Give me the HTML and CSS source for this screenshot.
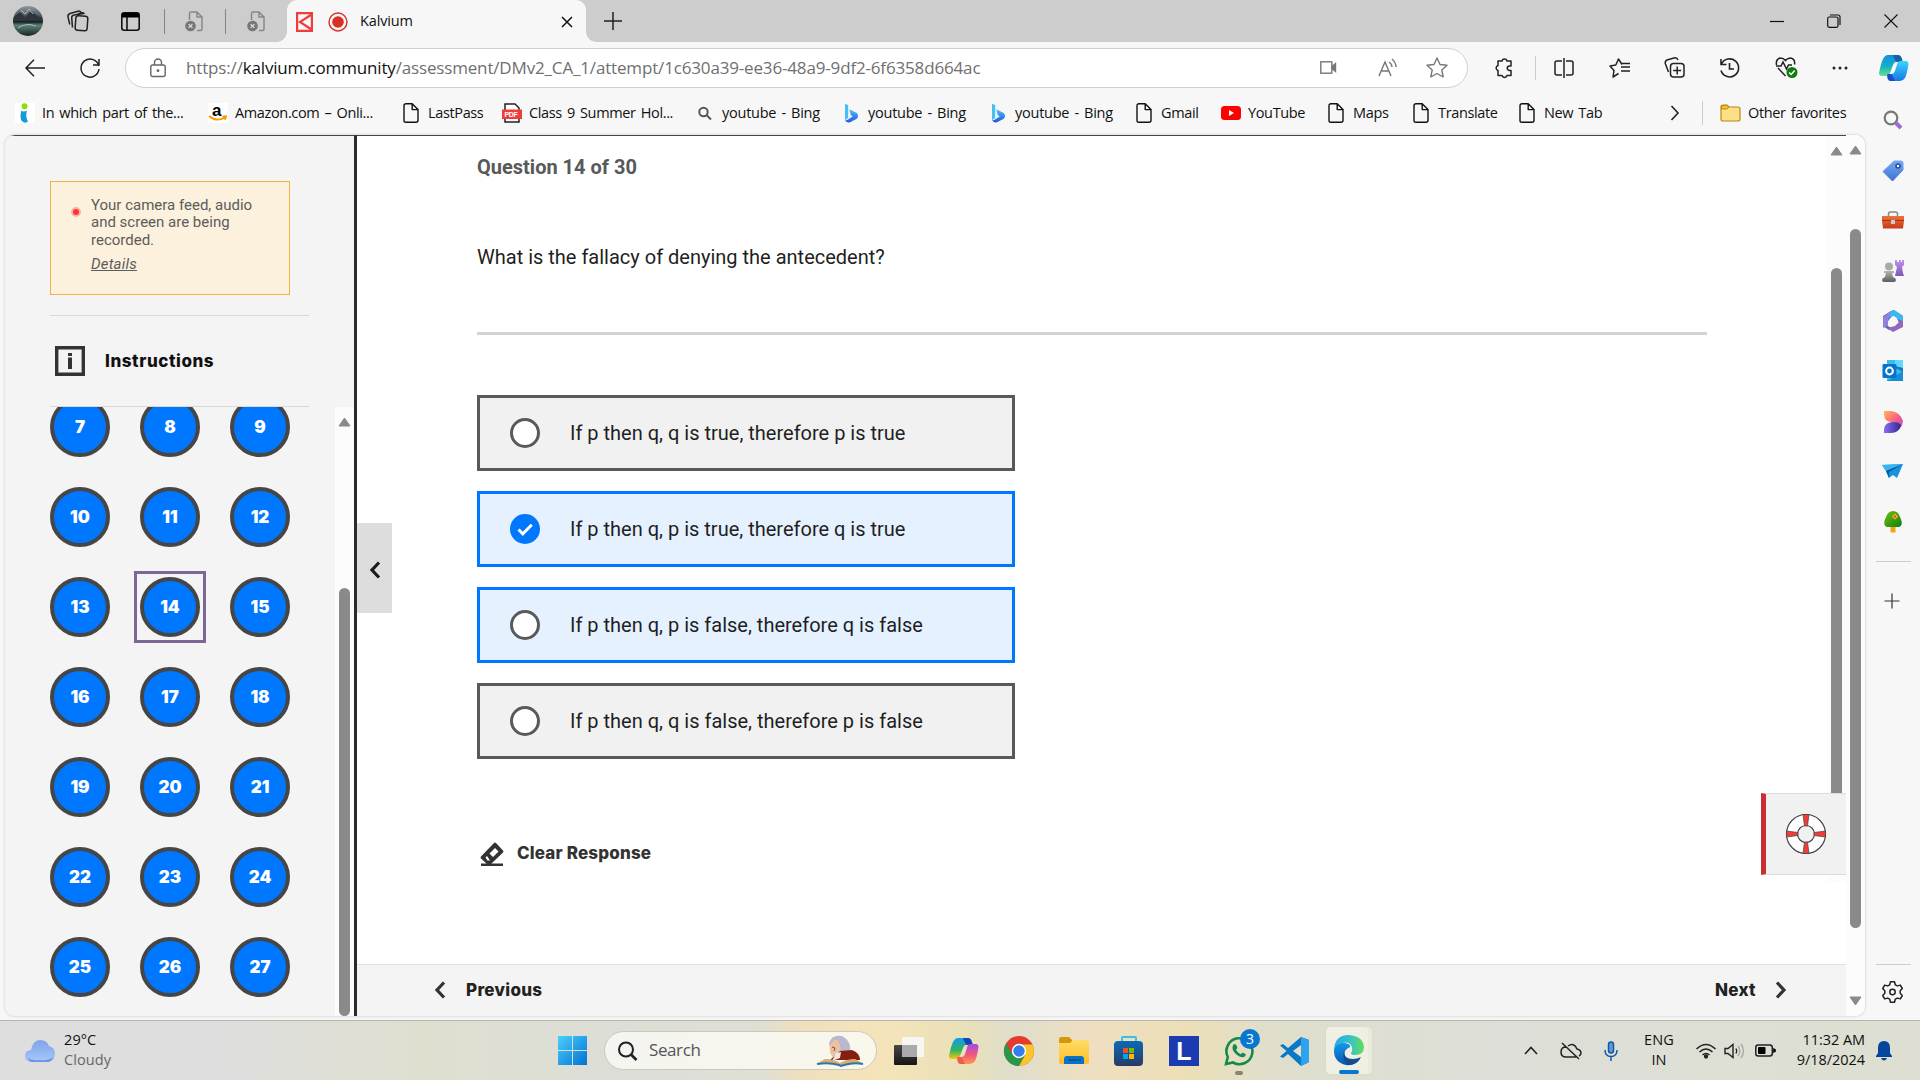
FILE: index.html
```html
<!DOCTYPE html>
<html lang="en">
<head>
<meta charset="utf-8">
<title>Kalvium</title>
<link rel="stylesheet" href="styles.css">
</head>
<body>
<svg class="defs" width="0" height="0">
  <defs>
    <linearGradient id="bing" x1="0" y1="0" x2="0" y2="1"><stop offset="0" stop-color="#4cc3f5"/><stop offset="1" stop-color="#2356e0"/></linearGradient>
    <linearGradient id="cyan" x1="0" y1="0" x2="1" y2="1"><stop offset="0" stop-color="#4cd0fb"/><stop offset="1" stop-color="#0072d4"/></linearGradient>
    <linearGradient id="copA" x1="0" y1="0" x2="0" y2="1"><stop offset="0" stop-color="#1590e0"/><stop offset=".55" stop-color="#11b3c5"/><stop offset="1" stop-color="#6be08a"/></linearGradient>
    <linearGradient id="copB" x1="0" y1="0" x2="0" y2="1"><stop offset="0" stop-color="#3bd5ff"/><stop offset="1" stop-color="#1477e8"/></linearGradient>
    <linearGradient id="rainA" x1="0" y1="0" x2="0" y2="1"><stop offset="0" stop-color="#109cf0"/><stop offset=".6" stop-color="#35b45c"/><stop offset="1" stop-color="#ffc60a"/></linearGradient>
    <linearGradient id="rainB" x1="0" y1="0" x2="0" y2="1"><stop offset="0" stop-color="#a24be8"/><stop offset=".55" stop-color="#f4577c"/><stop offset="1" stop-color="#ff9a4a"/></linearGradient>
    <linearGradient id="purple" x1="0" y1="0" x2="0" y2="1"><stop offset="0" stop-color="#c193ea"/><stop offset="1" stop-color="#7e57b8"/></linearGradient>
    <linearGradient id="grey" x1="0" y1="0" x2="0" y2="1"><stop offset="0" stop-color="#b5b5b5"/><stop offset="1" stop-color="#5c5c5c"/></linearGradient>
    <linearGradient id="tag" x1="0" y1="0" x2="0" y2="1"><stop offset="0" stop-color="#76a9f1"/><stop offset="1" stop-color="#3d71d3"/></linearGradient>
    <linearGradient id="box" x1="0" y1="0" x2="0" y2="1"><stop offset="0" stop-color="#f0713a"/><stop offset="1" stop-color="#c43a16"/></linearGradient>
    <linearGradient id="desA" x1="0" y1="0" x2="1" y2="1"><stop offset="0" stop-color="#ffb45e"/><stop offset=".5" stop-color="#fb5f82"/><stop offset="1" stop-color="#a83cf5"/></linearGradient>
    <linearGradient id="desB" x1="0" y1="0" x2="1" y2="0"><stop offset="0" stop-color="#8a6cf2"/><stop offset="1" stop-color="#33278f"/></linearGradient>
    <linearGradient id="tree" x1="0" y1="0" x2="1" y2="1"><stop offset="0" stop-color="#6fc40f"/><stop offset="1" stop-color="#107c10"/></linearGradient>
    <linearGradient id="folder" x1="0" y1="0" x2="0" y2="1"><stop offset="0" stop-color="#ffdc68"/><stop offset="1" stop-color="#fcbf27"/></linearGradient>
    <linearGradient id="store" x1="0" y1="0" x2="0" y2="1"><stop offset="0" stop-color="#0a6bb5"/><stop offset="1" stop-color="#293a66"/></linearGradient>
    <linearGradient id="edgeG" x1="0" y1="0" x2="1" y2="0"><stop offset="0" stop-color="#2aa9e8"/><stop offset=".55" stop-color="#35c3c8"/><stop offset="1" stop-color="#66dd55"/></linearGradient>
    <linearGradient id="edgeB" x1="0" y1="0" x2="0" y2="1"><stop offset="0" stop-color="#159ae8"/><stop offset="1" stop-color="#0b56ae"/></linearGradient>
    <linearGradient id="cloud" x1="0" y1="0" x2="0" y2="1"><stop offset="0" stop-color="#7fa3e8"/><stop offset="1" stop-color="#a7c8f8"/></linearGradient>
    <linearGradient id="tvA" x1="0" y1="0" x2="0" y2="1"><stop offset="0" stop-color="#474747"/><stop offset="1" stop-color="#161616"/></linearGradient>
    <linearGradient id="lake" x1="0" y1="0" x2="0" y2="1"><stop offset="0" stop-color="#8f98a3"/><stop offset=".42" stop-color="#3d4349"/><stop offset=".5" stop-color="#0e1413"/><stop offset=".65" stop-color="#5d7f78"/><stop offset="1" stop-color="#142421"/></linearGradient>
    <symbol id="page" viewBox="0 0 20 20"><path d="M3 2.700Q3 .8 5 .8h6.200L17 6.600v11Q17 19.200 15 19.200H5Q3 19.200 3 17.400zM11.200.8v5.800H17" fill="none" stroke="#111" stroke-width="1.400" stroke-linejoin="round"/></symbol>
    <symbol id="b" viewBox="0 0 20 20"><path d="M4 .8l3.200 1.300v13L4 17.200z" fill="#46c0f4"/><path d="M8.300 6.200l7 3.500c2.400 1.400 2 4.800.5 6L9 19.300q-3 1-5-2.100 2 .2 3.800-1.200l4-2.700-2-1z" fill="url(#bing)"/></symbol>
    <symbol id="deadpage" viewBox="0 0 19 21"><path d="M4.500 9V2.500Q4.500 1 6 1h6l5 5v12q0 1.500-1.500 1.500H12M12 1v5h5" fill="none" stroke="#888" stroke-width="1.500"/><circle cx="5.500" cy="15" r="5.300" fill="#777"/><path d="M3.600 13.100l3.800 3.800m0-3.800l-3.800 3.800" stroke="#ddd" stroke-width="1.300"/></symbol>
  </defs>
</svg>

<header class="tabs">
  <svg width="30" height="30" viewBox="0 0 30 30"><circle cx="15" cy="15" r="15" fill="url(#lake)"/><path d="M1 11l6-5 5 5 6-6 5 4 6 3v3H0z" fill="#2f353c"/><path d="M8 4l4 4 4-5 4 5M5 22q8-6 18-2" stroke="#abb8bd" fill="none"/></svg>
  <svg width="22" height="22" viewBox="0 0 22 22" fill="none" stroke="#222" stroke-width="1.500"><rect x="8.500" y="6" width="12" height="14.500" rx="2.500" transform="rotate(4 14 13)"/><path d="M5.500 17.500L4.700 8Q4.600 5.300 7 5l10-1.500q-.5-1-2-.8L11 3.400M2.800 14.500L1 6.800Q.7 4.300 3 3.500L11 1.200q2-.5 3 1.200"/></svg>
  <svg width="19" height="19" viewBox="0 0 19 19"><rect x=".8" y=".8" width="17.400" height="17.400" rx="2.500" fill="none" stroke="#111" stroke-width="1.600"/><path d="M1 1h17v4.500H1z"/><path d="M6 5v13" stroke="#111" stroke-width="1.600"/></svg>
  <i class="tab-sep"></i>
  <svg width="19" height="21"><use href="#deadpage"/></svg>
  <i class="tab-sep"></i>
  <svg width="19" height="21"><use href="#deadpage"/></svg>
  <div class="tab">
    <svg width="17" height="20" viewBox="0 0 17 20" fill="none" stroke="#f23c3c" stroke-width="2.200"><path d="M1.100 1.100h14.800v17.800H1.100zM15.500 2.500L4 10l11.500 7.500"/></svg>
    <svg width="20" height="20" viewBox="0 0 20 20"><circle cx="10" cy="10" r="9" fill="none" stroke="#d93025" stroke-width="1.400"/><circle cx="10" cy="10" r="5.800" fill="#d93025"/></svg>
    <span class="tab-title">Kalvium</span>
    <svg width="12" height="12" viewBox="0 0 12 12" stroke="#111" stroke-width="1.500"><path d="M1 1l10 10M11 1L1 11"/></svg>
  </div>
  <svg width="18" height="18" viewBox="0 0 18 18" stroke="#222" stroke-width="1.500"><path d="M9 0v18M0 9h18"/></svg>
  <svg width="14" height="14" viewBox="0 0 14 14" stroke="#111" stroke-width="1.200"><path d="M0 7.500h14"/></svg>
  <svg width="14" height="14" viewBox="0 0 14 14" fill="none" stroke="#111" stroke-width="1.200"><rect x=".7" y="3" width="10.300" height="10.300" rx="1.500"/><path d="M3 1h8q2 0 2 2v8"/></svg>
  <svg width="14" height="14" viewBox="0 0 14 14" stroke="#111" stroke-width="1.100"><path d="M.5.500l13 13m0-13l-13 13"/></svg>
</header>

<nav class="toolbar">
  <svg width="20" height="18" viewBox="0 0 20 18" fill="none" stroke="#222" stroke-width="1.500"><path d="M20 9H1M9 .8L1 9l8 8.200"/></svg>
  <svg width="20" height="20" viewBox="0 0 20 20" fill="none" stroke="#222" stroke-width="1.500"><path d="M18.800 8A9 9 0 1 0 19 11M19 1v6h-6"/></svg>
  <div class="address">
    <svg width="16" height="20" viewBox="0 0 16 20" fill="none" stroke="#666" stroke-width="1.400"><rect x=".8" y="7" width="14.400" height="11.500" rx="2"/><path d="M4.500 7V4.500a3.500 3.500 0 0 1 7 0V7"/><circle cx="8" cy="12.700" r=".7" fill="#555"/></svg>
    <span class="url">https://<b>kalvium.community</b>/assessment/DMv2_CA_1/attempt/1c630a39-ee36-48a9-9df2-6f6358d664ac</span>
    <svg width="17" height="13" viewBox="0 0 17 13" fill="none" stroke="#777" stroke-width="1.400"><rect x=".8" y=".8" width="11" height="11.400"/><path d="M12 5.500l3.500-3v8L12 7.500z" fill="#777"/></svg>
    <svg width="20" height="20" viewBox="0 0 20 20" fill="none" stroke="#777" stroke-width="1.400"><path d="M1 18L7 4l6 14M3 13h8M11 4q3 2 3 5M14 1q4 3.500 4 8"/></svg>
    <svg width="22" height="21" viewBox="0 0 22 21" fill="none" stroke="#777" stroke-width="1.400" stroke-linejoin="round"><path d="M11 1l3 6.500 7 .8-5.200 4.700 1.400 7L11 16.500 4.800 20l1.400-7L1 8.300l7-.8z"/></svg>
  </div>
  <svg width="20" height="20" viewBox="0 0 20 20" fill="none" stroke="#222" stroke-width="1.500" stroke-linejoin="round"><path d="M4 3h4a2.600 2.600 0 0 1 5 0h4v5h-1.500a2.200 2.200 0 0 0 0 4.500H17v5h-4a2.600 2.600 0 0 1-5 0H4v-5a2.600 2.600 0 0 1 0-5z"/></svg>
  <i class="sep"></i>
  <svg width="20" height="20" viewBox="0 0 20 20" fill="none" stroke="#222" stroke-width="1.500"><path d="M8 3H3Q1 3 1 5v10q0 2 2 2h5M12 3h5q2 0 2 2v10q0 2-2 2h-5M10 0v20"/></svg>
  <svg width="21" height="20" viewBox="0 0 21 20" fill="none" stroke="#222" stroke-width="1.500" stroke-linejoin="round"><path d="M13 6.500L9.500 1 6.800 7 1 8l4 4.500-1 6.500 5.500-3.500M12 9h9M12 5.500h9M12 13h9" /></svg>
  <svg width="21" height="21" viewBox="0 0 21 21" fill="none" stroke="#222" stroke-width="1.500"><rect x="6.500" y="6.500" width="13.500" height="13.500" rx="3"/><path d="M13.200 9.500v8M9.200 13.500h8M4.500 15L1.300 6.500Q.8 4 3 3L10 1q3-.8 4 2"/></svg>
  <svg width="21" height="20" viewBox="0 0 21 20" fill="none" stroke="#222" stroke-width="1.600"><path d="M2 1v5.500h5.500M2.500 6A9 9 0 1 1 2 12.500M10.500 5v6h4.500"/></svg>
  <svg width="23" height="21" viewBox="0 0 23 21" fill="none" stroke="#222" stroke-width="1.500"><path d="M1.500 8Q.5 2 5.500 1q3 0 5 2.500Q12.500 1 15.500 1q5 1 4 6.500M3 11l7.500 8M1 9h5l2-4 3.500 7 2-4H17"/><circle cx="17" cy="15.500" r="5.500" fill="#107c10" stroke="none"/><path d="M14.200 15.500l2 2 3.400-4" stroke="#fff"/></svg>
  <svg width="18" height="6" viewBox="0 0 18 6" fill="#222"><circle cx="3" cy="3" r="1.500"/><circle cx="9" cy="3" r="1.500"/><circle cx="15" cy="3" r="1.500"/></svg>
  <svg width="30" height="28" viewBox="0 0 30 28"><path d="M9 1h9q3 0 4 3l1 4h-6q-2 0-3 3l-3 8q-1 3-4 3H3q-3 0-3-3Q2 9 4 5 6 1 9 1z" fill="url(#copA)"/><path d="M14 1h5q3 0 4 4l1 3h-6q-2-1-4-7z" fill="#1562a8"/><path d="M21 27h-9q-3 0-3.500-3L8 20h5q2 0 3-3l2.500-8q1-2 3-2h5q3 0 3 3Q28 20 26 24q-2 3-5 3z" fill="url(#copB)"/><path d="M8.500 20h4l3.500 7h-4q-3 0-3.500-4z" fill="#2049c9"/></svg>
</nav>

<nav class="bookmarks">
  <a><svg width="20" height="20"><path d="M0 0h20v20H0z" fill="#fff"/><circle cx="9.500" cy="3.200" r="3" fill="#8ee000"/><path d="M6 8q3.500 1 6-.5-2 6 1 11-4 3-7-1.500-1-4 0-9z" fill="#149bd7"/></svg>In which part of the...</a>
  <a><svg width="20" height="20"><path d="M0 0h20v20H0z" fill="#fff"/><text x="4" y="13" class="amz">a</text><path d="M1 13q8 6.500 16 1.500M14.500 13.500l3.500-.3-1 3.500" fill="none" stroke="#f90" stroke-width="1.800"/></svg>Amazon.com – Onli...</a>
  <a><svg width="20" height="20"><use href="#page"/></svg>LastPass</a>
  <a><svg width="20" height="20"><path d="M3 6V1h10l4 4v14H3z" fill="#fff" stroke="#222" stroke-width="1.500"/><path d="M0 6.500h20v9.500H0z" fill="#f23b3b"/><text x="2.500" y="14" class="pdf">PDF</text></svg>Class 9 Summer Hol...</a>
  <a><svg width="20" height="20" fill="none" stroke="#555" stroke-width="2"><circle cx="8.500" cy="9" r="4.200"/><path d="M11.500 12l4.500 4.500"/></svg>youtube - Bing</a>
  <a><svg width="20" height="20"><use href="#b"/></svg>youtube - Bing</a>
  <a><svg width="20" height="20"><use href="#b"/></svg>youtube - Bing</a>
  <a><svg width="20" height="20"><use href="#page"/></svg>Gmail</a>
  <a><svg width="20" height="20"><rect y="3" width="20" height="14" rx="3.500" fill="red"/><path d="M8 7l5 3-5 3z" fill="#fff"/></svg>YouTube</a>
  <a><svg width="20" height="20"><use href="#page"/></svg>Maps</a>
  <a><svg width="20" height="20"><use href="#page"/></svg>Translate</a>
  <a><svg width="20" height="20"><use href="#page"/></svg>New Tab</a>
  <svg width="10" height="16" fill="none" stroke="#222" stroke-width="1.600"><path d="M1.500 1l6.500 7-6.500 7"/></svg>
  <i class="sep"></i>
  <a><svg width="21" height="20"><path d="M1 4q0-2 2-2h4l2 2h9q2 0 2 2v10q0 2-2 2H3q-2 0-2-2z" fill="#ffdf85" stroke="#b88a1b" stroke-width="1.200"/><path d="M1.500 6V4q0-1.500 1.500-1.500h4L9 4 7 6z" fill="#f3c22f" stroke="#b88a1b"/></svg>Other favorites</a>
</nav>

<div class="browser">
  <main class="page">
    <aside class="side">
      <div class="alert">
        <i class="rec"></i>
        <div><p>Your camera feed, audio and screen are being recorded.</p><a class="details">Details</a></div>
      </div>
      <div class="instructions">
        <svg width="30" height="30" viewBox="0 0 30 30"><path d="M1.700 1.700h26.600v26.600H1.700z" fill="none" stroke="#333" stroke-width="3.400"/><path d="M13 7h4v3h-4zM13 11.500h4V23h-4z" fill="#333"/></svg>
        <span>Instructions</span>
      </div>
      <div class="numbers">
        <div class="grid">
          <b>7</b><b>8</b><b>9</b><b>10</b><b>11</b><b>12</b><b>13</b><b class="current">14</b><b>15</b><b>16</b><b>17</b><b>18</b><b>19</b><b>20</b><b>21</b><b>22</b><b>23</b><b>24</b><b>25</b><b>26</b><b>27</b>
        </div>
        <div class="scroll side-scroll"><svg width="13" height="10"><path d="M6.500 1L12 9H1z" fill="#8a8a8a" stroke="#8a8a8a" stroke-linejoin="round"/></svg><i></i></div>
      </div>
    </aside>
    <section class="main">
      <div class="upper">
        <div class="question">
          <h1>Question 14 of 30</h1>
          <p class="ask">What is the fallacy of denying the antecedent?</p>
          <div class="options">
            <label><i></i>If p then q, q is true, therefore p is true</label>
            <label class="on"><i class="tick"><svg width="30" height="30" fill="none" stroke="#fff" stroke-width="3"><path d="M8.500 15.500l4.300 4.300 9-9"/></svg></i>If p then q, p is true, therefore q is true</label>
            <label class="on"><i></i>If p then q, p is false, therefore q is false</label>
            <label><i></i>If p then q, q is false, therefore p is false</label>
          </div>
          <div class="clear"><svg width="24" height="24" viewBox="0 0 24 24"><path d="M1 14.500L14 1q1-1 2 0l7 7.500q1 1 0 2L11 22H7l-6-5.500q-1-1 0-2z" fill="#333"/><path d="M9.500 11.500L15 6l3.500 3.500-5.500 5.500zM5.500 15.500l1.500-1.500 3 4.500H7.500z" fill="#fff"/><path d="M1 21.500h22V24H1z" fill="#333"/></svg><span>Clear Response</span></div>
        </div>
        <div class="scroll inner-scroll"><svg width="13" height="10"><path d="M6.500 1L12 9H1z" fill="#8a8a8a" stroke="#8a8a8a" stroke-linejoin="round"/></svg><i></i></div>
        <button class="collapse"><svg width="12" height="18" fill="none" stroke="#1c1c1c" stroke-width="3.200"><path d="M10 1.500L3 9l7 7.500"/></svg></button>
        <div class="help"><svg width="40" height="40" viewBox="0 0 40 40"><circle cx="20" cy="20" r="14" fill="none" stroke="#444" stroke-width="12.200"/><circle cx="20" cy="20" r="14" fill="none" stroke="#fff" stroke-width="9.800"/><path d="M17 .5h6L21.500 12h-3zM17 39.500h6L21.500 28h-3zM.5 17v6L12 21.500v-3zM39.500 17v6L28 21.500v-3z" fill="#f23c36" stroke="#444" stroke-width=".7"/></svg></div>
      </div>
      <footer>
        <svg width="12" height="18" fill="none" stroke="#333" stroke-width="3.200"><path d="M10 1.500L3 9l7 7.500"/></svg><span>Previous</span>
        <span class="next">Next</span><svg width="12" height="18" fill="none" stroke="#333" stroke-width="3.200"><path d="M2 1.500L9 9l-7 7.500"/></svg>
      </footer>
    </section>
    <div class="scroll outer-scroll">
      <svg width="13" height="10"><path d="M6.500 1L12 9H1z" fill="#8a8a8a" stroke="#8a8a8a" stroke-linejoin="round"/></svg><i></i>
      <svg width="13" height="10"><path d="M6.500 9L12 1H1z" fill="#8a8a8a" stroke="#8a8a8a" stroke-linejoin="round"/></svg>
    </div>
  </main>
  <aside class="rail">
    <svg viewBox="0 0 24 24"><circle cx="10" cy="10" r="6.300" fill="none" stroke="#777" stroke-width="2.200"/><path d="M15 15l5 5" stroke="#a06bd6" stroke-width="4"/></svg>
    <svg viewBox="0 0 24 24"><path d="M13 2h7q2 0 2 2v7L11.500 22 2 12.500z" fill="url(#tag)" stroke="url(#tag)" stroke-linejoin="round"/><circle cx="17" cy="7" r="2" fill="#fff" stroke="#284d96" stroke-width="1.500"/></svg>
    <svg viewBox="0 0 24 24"><path d="M7.500 7V5q0-2 2-2h5q2 0 2 2v2" fill="none" stroke="#888" stroke-width="1.500"/><path d="M1 7h22v5l-1 7.500H2L1 12z" fill="url(#box)"/><path d="M1 11.500h22" stroke="#a93410"/><rect x="10" y="11" width="4" height="4" fill="#c5ccd2"/></svg>
    <svg viewBox="0 0 24 24"><path d="M14 1h2v2h2V1h2v2h1V1h2v5l-2 2 1 6 1 3h-9l2-9-2-2z" fill="url(#purple)"/><circle cx="8" cy="7.500" r="4" fill="#aaa"/><path d="M3 12h10v2h-2l1 4q3 1 3 3t-2 2H3q-2 0-2-2t3-3l1-4H3z" fill="url(#grey)"/></svg>
    <svg viewBox="0 0 24 24"><path d="M10 2l3-1 9 6v5l-4 2-2-6-5-3-1 4-3 3v5l3 2-2 2-6-4V7z" fill="#356dcb"/><path d="M9 3l4-2 9 6v6l-5-3-4-3-4 1z" fill="#37b9f1"/><path d="M22 12v6l-10 5-6-4 8-2 4-4-2-3z" fill="#9467ba"/><path d="M2 8l7-5v5l-2 3v6l-5 2z" fill="#9381d9"/><circle cx="12" cy="12" r="3.800" fill="#f7f7f7"/></svg>
    <svg viewBox="0 0 24 24"><path d="M6 1h16v21H6z" fill="#42b9ed"/><path d="M6 22l16-10v10z" fill="#148ed9"/><path d="M14 1h8v8h-8z" fill="#5edafa"/><path d="M13 8l9 5v-4l-8-2z" fill="#1575bd"/><rect x="1.500" y="5" width="14" height="14" rx="1" fill="#0873cd"/><circle cx="8.500" cy="12" r="3.400" fill="none" stroke="#fff" stroke-width="2"/></svg>
    <svg viewBox="0 0 24 24"><path d="M3 1h7q9 1 12 10-1 9-9 11l-2-10q-8 0-8-8z" fill="url(#desA)"/><path d="M3 23v-4q1-7 9-7 6 0 8 3-2 8-10 8z" fill="url(#desB)"/></svg>
    <svg viewBox="0 0 24 24"><path d="M1 5l21-1-6 14-4-3-4 3-3-7z" fill="#1493dd"/><path d="M1 5l21-1L5 11z" fill="#38b6ed"/><path d="M22 4L8 12v6l-3-7z" fill="#0a589d"/></svg>
    <svg viewBox="0 0 24 24"><path d="M9.500 16h5v6.500h-5z" fill="#f6a313"/><path d="M12 1q5 0 7 6 4 8-1 10H6Q1 15 5 7q2-6 7-6z" fill="url(#tree)"/><path d="M14 3.500l3 3-3 3-3-3z" fill="#ffc41d"/><circle cx="14" cy="6.500" r="1.200" fill="#e34b12"/></svg>
    <hr>
    <svg class="plus" viewBox="0 0 24 24" stroke="#333" stroke-width="1.200"><path d="M11 4.500v15M3.500 12h15"/></svg>
    <hr class="low">
    <svg viewBox="0 0 24 24" fill="none" stroke="#222" stroke-width="1.500" stroke-linejoin="round"><path d="M9.500 1.800h4l.8 3 2 1.100 3-.8 2 3.400-2.100 2.200v2.600l2.100 2.200-2 3.400-3-.8-2 1.100-.8 3h-4l-.8-3-2-1.100-3 .8-2-3.400 2.100-2.200v-2.600L1.700 8.500l2-3.400 3 .8 2-1.100z"/><circle cx="11.500" cy="12" r="2.700"/></svg>
  </aside>
</div>

<footer class="taskbar">
  <svg width="30" height="22" viewBox="0 0 30 22"><path d="M7 22q-7 0-7-6t6-6Q8 0 15 0t9 6q6 1 6 8t-7 8z" fill="url(#cloud)"/><path d="M3 18q4 3 12 2 8 1 13-3-1 5-6 5H7q-3 0-4-4z" fill="#6a95e6"/></svg>
  <div class="weather">29°C<br><span>Cloudy</span></div>
  <svg width="29" height="29" fill="url(#cyan)"><path d="M0 0h14v14H0zM15 0h14v14H15zM0 15h14v14H0zM15 15h14v14H15z"/></svg>
  <div class="search">
    <svg width="19" height="20" fill="none" stroke="#222" stroke-width="2"><circle cx="8" cy="8.500" r="7"/><path d="M13 13.500l5.500 5.500" stroke-width="2.600"/></svg><span>Search</span>
    <svg width="46" height="32" viewBox="0 0 46 32"><path d="M12 8Q15-1 25 1q10 5 8 17l-8 5-11-5z" fill="#bbb8cd"/><path d="M18 4q7 4 5 13l-7 5q-4-3-3-12z" fill="#eec0a2"/><path d="M15 12l3 1-1 3" stroke="#765249" fill="none"/><path d="M13 25l10-9 12-1q8 3 8 10z" fill="#84200f"/><path d="M19 18l5-1-1 6-8 3z" fill="#eee7e3"/><path d="M1 28l7-4q9 0 15 4 7-4 15-4l7 4-21 2z" fill="#d7ac70"/><path d="M0 29q12-2 22 1l2 1 3-1q10-3 19-1" fill="none" stroke="#2c78a9" stroke-width="2"/></svg>
  </div>
  <svg width="30" height="28"><rect y="8" width="23" height="20" rx="1" fill="url(#tvA)"/><rect x="8" width="22" height="20" rx="1" fill="#f8f8f8" opacity=".93"/><path d="M8 8h15v12H8z" fill="#aaa"/></svg>
  <svg width="30" height="28" viewBox="0 0 30 28"><path d="M9 1h9q3 0 4 3l1 4h-6q-2 0-3 3l-3 8q-1 3-4 3H3q-3 0-3-3Q2 9 4 5 6 1 9 1z" fill="url(#rainA)"/><path d="M14 1h5q3 0 4 4l1 3h-6q-2-1-4-7z" fill="#1445ba"/><path d="M21 27h-9q-3 0-3.500-3L8 20h5q2 0 3-3l2.500-8q1-2 3-2h5q3 0 3 3Q28 20 26 24q-2 3-5 3z" fill="url(#rainB)"/><path d="M8.500 20h4l3.500 7h-4q-3 0-3.500-4z" fill="#f45b4a"/></svg>
  <svg width="30" height="30" viewBox="0 0 30 30"><circle cx="15" cy="15" r="15" fill="#e33b2e"/><path d="M2 7.500A15 15 0 0 0 15 30l6.500-11.500H8.500z" fill="#279847"/><path d="M28.500 8.500A15 15 0 0 1 15 30l6.500-11.500L15 8.500z" fill="#fcc62a"/><circle cx="15" cy="15" r="7.200" fill="#fff"/><circle cx="15" cy="15" r="5.700" fill="#307fed"/></svg>
  <svg width="30" height="28"><path d="M0 3q0-3 2-3h8l3 3v4H0z" fill="#d69809"/><path d="M0 6h11l3-3h14q2 0 2 2v20q0 2-2 2H2q-2 0-2-2z" fill="url(#folder)"/><path d="M5 27v-5q0-3 3-3h14q3 0 3 3v5z" fill="#0873c4"/><path d="M9 23h13" stroke="#07508c" stroke-width="1.500"/></svg>
  <svg width="30" height="30"><path d="M8 6V2q0-1 1-1h12q1 0 1 1v4" fill="none" stroke="#37bff0" stroke-width="2"/><rect y="5" width="29" height="25" rx="4" fill="url(#store)"/><path d="M9 12h5v5H9z" fill="#f25022"/><path d="M15 12h5v5h-5z" fill="#7fba00"/><path d="M9 18h5v5H9z" fill="#00a4ef"/><path d="M15 18h5v5h-5z" fill="#ffb900"/></svg>
  <div class="app-l">L</div>
  <div class="whatsapp"><svg width="30" height="30" fill="none" stroke="#168a4c" stroke-width="2.600"><path d="M2 28l1.800-7A13 13 0 1 1 9 26.500z"/><path d="M9.500 8.500q2-1.500 3 1l.8 2q.3 1-1.300 2.300 1.500 3 4.500 4.500 1.500-2 2.500-1.500l2.500 1.200q1 1-1 2.800-3 1.500-7.500-1.800-4-3.500-4.500-6.500-.2-2.500 1-4z" fill="#168a4c" stroke="none"/></svg><span class="count">3</span><i></i></div>
  <svg width="30" height="30"><path d="M22 1l8 3v22l-8 4L9 18l-5 4-3-1.500L7.500 15 1 9.500 4 8l5 4z" fill="#0879c6"/><path d="M22 1l8 3v22l-8 4z" fill="#2ba3ef"/><path d="M22 9v12l-8-6z" fill="#e2e0cf"/></svg>
  <div class="edge"><svg width="30" height="30"><path d="M0 16Q0 0 15 0q14 1 15 12 0 8-9 8-4 0-4-2 3-5-1-9Q9 4 0 16z" fill="url(#edgeG)"/><path d="M0 16Q2 7 11 8q6 1 5 4-7 3-5 9 4 8 15 3-5 7-14 6Q0 27 0 16z" fill="url(#edgeB)"/><path d="M10 15q-1 9 9 9 4 0 8-2-4 8-12 8-8-4-5-15z" fill="#124f91"/></svg><i></i></div>
  <svg width="14" height="9" fill="none" stroke="#222" stroke-width="1.600"><path d="M1 8l6-6.500L13 8"/></svg>
  <svg width="22" height="18" fill="none" stroke="#222" stroke-width="1.500"><path d="M6 5q-5 0-5 5t5 5h10M8 4q6-4 9 3 4 1 4 4 0 2-2 3M2 1l17 16"/></svg>
  <svg width="14" height="20" fill="none" stroke="#1556a8" stroke-width="1.500"><rect x="4.500" y="1" width="5" height="11" rx="2.500" fill="#5d9ad8"/><path d="M1 9q0 6.500 6 6.500T13 9M7 15.500V20"/></svg>
  <div class="lang">ENG<br>IN</div>
  <svg width="20" height="16" fill="none" stroke="#222" stroke-width="1.500"><path d="M.5 6q9.500-9 19 0M3.500 9q6.500-6 13 0M6.500 12q3.500-3 7 0"/><circle cx="10" cy="13.500" r="1.400" fill="#222"/></svg>
  <svg width="20" height="16" fill="none" stroke="#222" stroke-width="1.400"><path d="M1 5.500h3L9 1.500v13l-5-4H1zM12 5.500q1.500 2.500 0 5"/><path d="M14 3q3.500 5 0 10M17 1q5 7 0 14" stroke="#aaa"/></svg>
  <svg width="21" height="13"><rect x=".8" y="1" width="16.500" height="11" rx="2.500" fill="none" stroke="#222" stroke-width="1.500"/><rect x="3" y="3" width="7.500" height="7" rx="1"/><path d="M18.500 4.500l2 1v2l-2 1z" stroke="#222"/></svg>
  <div class="clock">11:32 AM<br>9/18/2024</div>
  <svg width="16" height="20" fill="#06469a"><path d="M8 0q6 0 6 7v5l2 3v1H0v-1l2-3V7q0-7 6-7zM5 17h6q-1 2.500-3 2.500T5 17z"/></svg>
</footer>
</body>
</html>
```
FILE: styles.css
```css
* { box-sizing: border-box; }
body { margin: 0; width: 1920px; height: 1080px; overflow: hidden; display: flex; flex-direction: column; background: #f7f7f7; font-family: "Open Sans", "Noto Sans", sans-serif; color: #111; }
svg { display: block; flex: none; overflow: visible; }
p, h1 { margin: 0; }
.defs { position: absolute; }

.tabs { height: 42px; background: #cdcdcd; display: grid; grid-template-columns: 54px 54px 43px 21px 40px 22px 40px 317px 1166px 57px 57px 36px; padding: 0 0 0 13px; align-items: center; flex: none; }
.tab-sep { width: 1px; height: 25px; background: #858585; }
.tab { position: relative; align-self: start; width: 299px; height: 42px; background: #f7f7f7; border-radius: 10px 10px 0 0; display: grid; grid-template-columns: 32px 32px 201px 12px; padding: 1px 0 0 9px; align-items: center; }
.tab::before, .tab::after { content: ""; position: absolute; bottom: 0; width: 10px; height: 10px; }
.tab::before { left: -10px; background: radial-gradient(circle at 0 0, transparent 9.5px, #f7f7f7 10px); }
.tab::after { right: -10px; background: radial-gradient(circle at 100% 0, transparent 9.5px, #f7f7f7 10px); }
.tab-title { font-size: 14.5px; line-height: 20px; letter-spacing: -.15px; margin: -2px 0 0 0; }

.toolbar { height: 51px; flex: none; display: grid; grid-template-columns: 55px 45px 1369px 41px 19px 55px 55px 55px 56px 56px 48px 30px; padding-left: 25px; align-items: center; }
.address { width: 1343px; height: 40px; border: 1px solid #cfcfcf; border-radius: 20px; background: #fff; display: grid; grid-template-columns: 36px 1134px 58px 48px 22px; padding-left: 24px; align-items: center; }
.url { font-size: 17px; letter-spacing: -.16px; color: #707070; white-space: nowrap; }
.url b { font-weight: 400; color: #111; }
.sep { width: 1px; height: 24px; background: #ccc; }

.bookmarks { height: 42px; flex: none; display: grid; grid-template-columns: 193px 193px 101px 193px 146px 147px 146px 87px 105px 85px 106px 153px 32px 18px 140px; padding: 0 0 3px 15px; align-items: center; }
.bookmarks a { display: flex; align-items: center; gap: 7px; white-space: nowrap; font-size: 14.5px; letter-spacing: -.36px; word-spacing: 1.7px; }
.bookmarks a:nth-child(5), .bookmarks a:nth-child(6), .bookmarks a:nth-child(7) { letter-spacing: -.25px; }
.amz { font: bold 17px "Liberation Sans", sans-serif; }
.pdf { font: bold 7px "Liberation Sans", sans-serif; fill: #fff; }

.browser { height: 885px; flex: none; display: flex; padding-left: 5px; }
.page { width: 1860px; height: 881px; display: flex; border-radius: 10px; overflow: hidden; box-shadow: 0 0 2px 1px #ddd; background: #fff; }
.side { width: 352px; border-right: 3px solid #2b2b2d; border-top: 1px solid #4a4648; background: #f4f4f4; display: flex; flex-direction: column; padding: 45px 0 0 45px; font-family: Roboto, sans-serif; }
.alert { width: 240px; height: 114px; border: 1px solid #efb341; background: #fcf1dd; padding: 15px 20px 0; display: flex; color: #5c5c5c; font-size: 15px; line-height: 17.3px; gap: 10px; }
.alert div { width: 180px; }
.alert p { margin-right: 10px; }
.details { display: block; margin-top: 7px; font-style: italic; text-decoration: underline; letter-spacing: .2px; }
.rec { flex: none; width: 10px; height: 10px; margin-top: 10px; border-radius: 50%; background: #f33; border: 2.5px solid #f8b3a8; }
.instructions { width: 259px; height: 92px; margin-top: 20px; border: solid #d8d8d8; border-width: 1px 0; display: flex; align-items: center; gap: 20px; padding-left: 5px; font: 800 17px Inter, sans-serif; letter-spacing: .57px; }
.numbers { flex: 1; overflow: hidden; display: flex; justify-content: space-between; }
.grid { display: grid; grid-template-columns: repeat(3, 60px); grid-auto-rows: 60px; gap: 30px; margin-top: -10px; }
.grid b { border: 4px solid #464646; border-radius: 50%; background: #07f; color: #fff; font: 900 17px/52px Inter, sans-serif; text-align: center; }
.grid .current { position: relative; }
.current::after { content: ""; position: absolute; inset: -10px; border: 3px solid #7b6896; }

.scroll { width: 19px; flex: none; background: #fcfcfc; display: flex; flex-direction: column; align-items: center; }
.scroll i { width: 11px; background: #8a8a8a; border-radius: 6px; }
.side-scroll svg { margin-top: 10px; }
.side-scroll i { margin-top: 161px; height: 450px; }

.main { width: 1489px; border-top: 1px solid #4a4648; display: flex; flex-direction: column; font-family: Roboto, sans-serif; }
.upper { position: relative; height: 828px; display: flex; justify-content: space-between; }
.question { width: 1350px; padding: 19px 0 0 120px; color: #1f1f1f; font-size: 20px; line-height: 24px; }
.question h1 { font-size: 20px; font-weight: 700; color: #595959; }
.ask { margin-top: 66px; padding-bottom: 63px; border-bottom: 3px solid #d3d3d3; }
.options { display: flex; flex-direction: column; gap: 20px; margin-top: 60px; }
.options label { width: 538px; height: 76px; border: 3px solid #595959; background: #f1f1f1; display: flex; align-items: center; gap: 30px; padding-left: 30px; }
.options i { width: 30px; height: 30px; border: 3px solid #595959; border-radius: 50%; background: #fff; }
.options .on { border-color: #07f; background: #e5f1ff; }
.options .tick { border: 0; background: #07f; }
.clear { margin-top: 83px; display: flex; align-items: center; gap: 13px; padding-left: 3px; font: 800 17px/24px Inter, sans-serif; letter-spacing: .17px; color: #333; }
.clear span { margin-top: -2px; }
.inner-scroll { height: 746px; }
.inner-scroll svg { margin-top: 10px; }
.inner-scroll i { margin-top: 112px; height: 540px; }
.collapse { position: absolute; left: 0; top: 387px; width: 35px; height: 90px; border: 0; padding: 3px 0 0 0; background: #ddd; display: grid; place-items: center; }
.help { position: absolute; right: 0; top: 657px; width: 85px; height: 82px; background: #f1f1f1; border: 1px solid #ddd; border-left: 5px solid #c73033; border-right: 0; display: grid; place-items: center; }
.main footer { height: 52px; border-top: 1px solid #e1e1e1; background: #f4f4f4; display: grid; grid-template-columns: 32px 1249px 60px 12px; padding: 0 0 2px 77px; align-items: center; font: 800 17px Inter, sans-serif; letter-spacing: .3px; color: #222; }

.outer-scroll svg { margin-top: 10px; }
.outer-scroll i { margin-top: 74px; height: 699px; }
.outer-scroll svg:last-child { margin-top: 68px; }

.rail { width: 55px; height: 885px; margin-top: -27px; display: flex; flex-direction: column; align-items: center; gap: 26.1px; padding: 0 0 0 1px; }
.rail svg { width: 24px; height: 24px; }
.rail svg:nth-child(2) { margin-top: 1px; }
.rail hr { width: 35px; margin: 1px 0 -1px; border: 0; border-top: 1px solid #ccc; }
.rail .plus { margin-top: 2px; }
.rail .low { margin: 325px 0 -11px; }

.taskbar { height: 60px; flex: none; border-top: 1px solid #b5b5ad; display: grid; grid-template-columns: 39px 494px 46px 290px 55px 55px 55px 55px 55px 55px 55px 46px 199px 36px 44px 37px 55px 28px 31px 37px 84px 16px; padding-left: 25px; align-items: center; background: linear-gradient(90deg, #dedede 0, #dedede 220px, #dfdfd0 420px, #dcddd6 620px, #dedfd4 760px, #efdfbd 800px, #f5e4b9 880px, #e9e0b9 970px, #dfdecc 1010px, #efdfc1 1090px, #ecdfb6 1190px, #dfdecc 1270px, #dddfd8 1500px, #dedfd2 1920px); font-size: 14.5px; line-height: 20px; letter-spacing: .1px; }
.weather, .lang, .clock { margin-top: -2px; white-space: nowrap; }
.weather span { color: #666; }
.search { width: 273px; height: 39px; border: 1px solid #ccc9bb; border-radius: 20px; background: linear-gradient(90deg, #f4f4f1, #faf7eb); display: grid; grid-template-columns: 31px 168px 46px; align-items: center; padding-left: 13px; font-size: 17px; letter-spacing: -.4px; color: #555; }
.search span { margin-top: -1px; }
.app-l { width: 30px; height: 30px; background: #1d3bb0; color: #fff; font: bold 25px/30px "Liberation Sans", sans-serif; text-align: center; }
.whatsapp { position: relative; }
.count { position: absolute; left: 16px; top: -7px; width: 20px; height: 20px; border-radius: 50%; background: #0877d1; color: #fff; text-align: center; font-size: 14px; }
.whatsapp i { position: absolute; left: 11px; bottom: -9px; width: 8px; height: 4px; border-radius: 2px; background: #858476; }
.edge { position: relative; width: 48px; height: 49px; border: 1px solid #dcdccd; border-radius: 5px; background: #efefe4; padding: 8px; box-shadow: inset -4px 0 #e9e9dc; }
.edge i { position: absolute; left: 13px; bottom: 0; width: 20px; height: 4px; border-radius: 2px; background: #0877d1; }
.lang { text-align: center; width: 36px; }
.clock { text-align: right; width: 73px; letter-spacing: -.05px; }
```
